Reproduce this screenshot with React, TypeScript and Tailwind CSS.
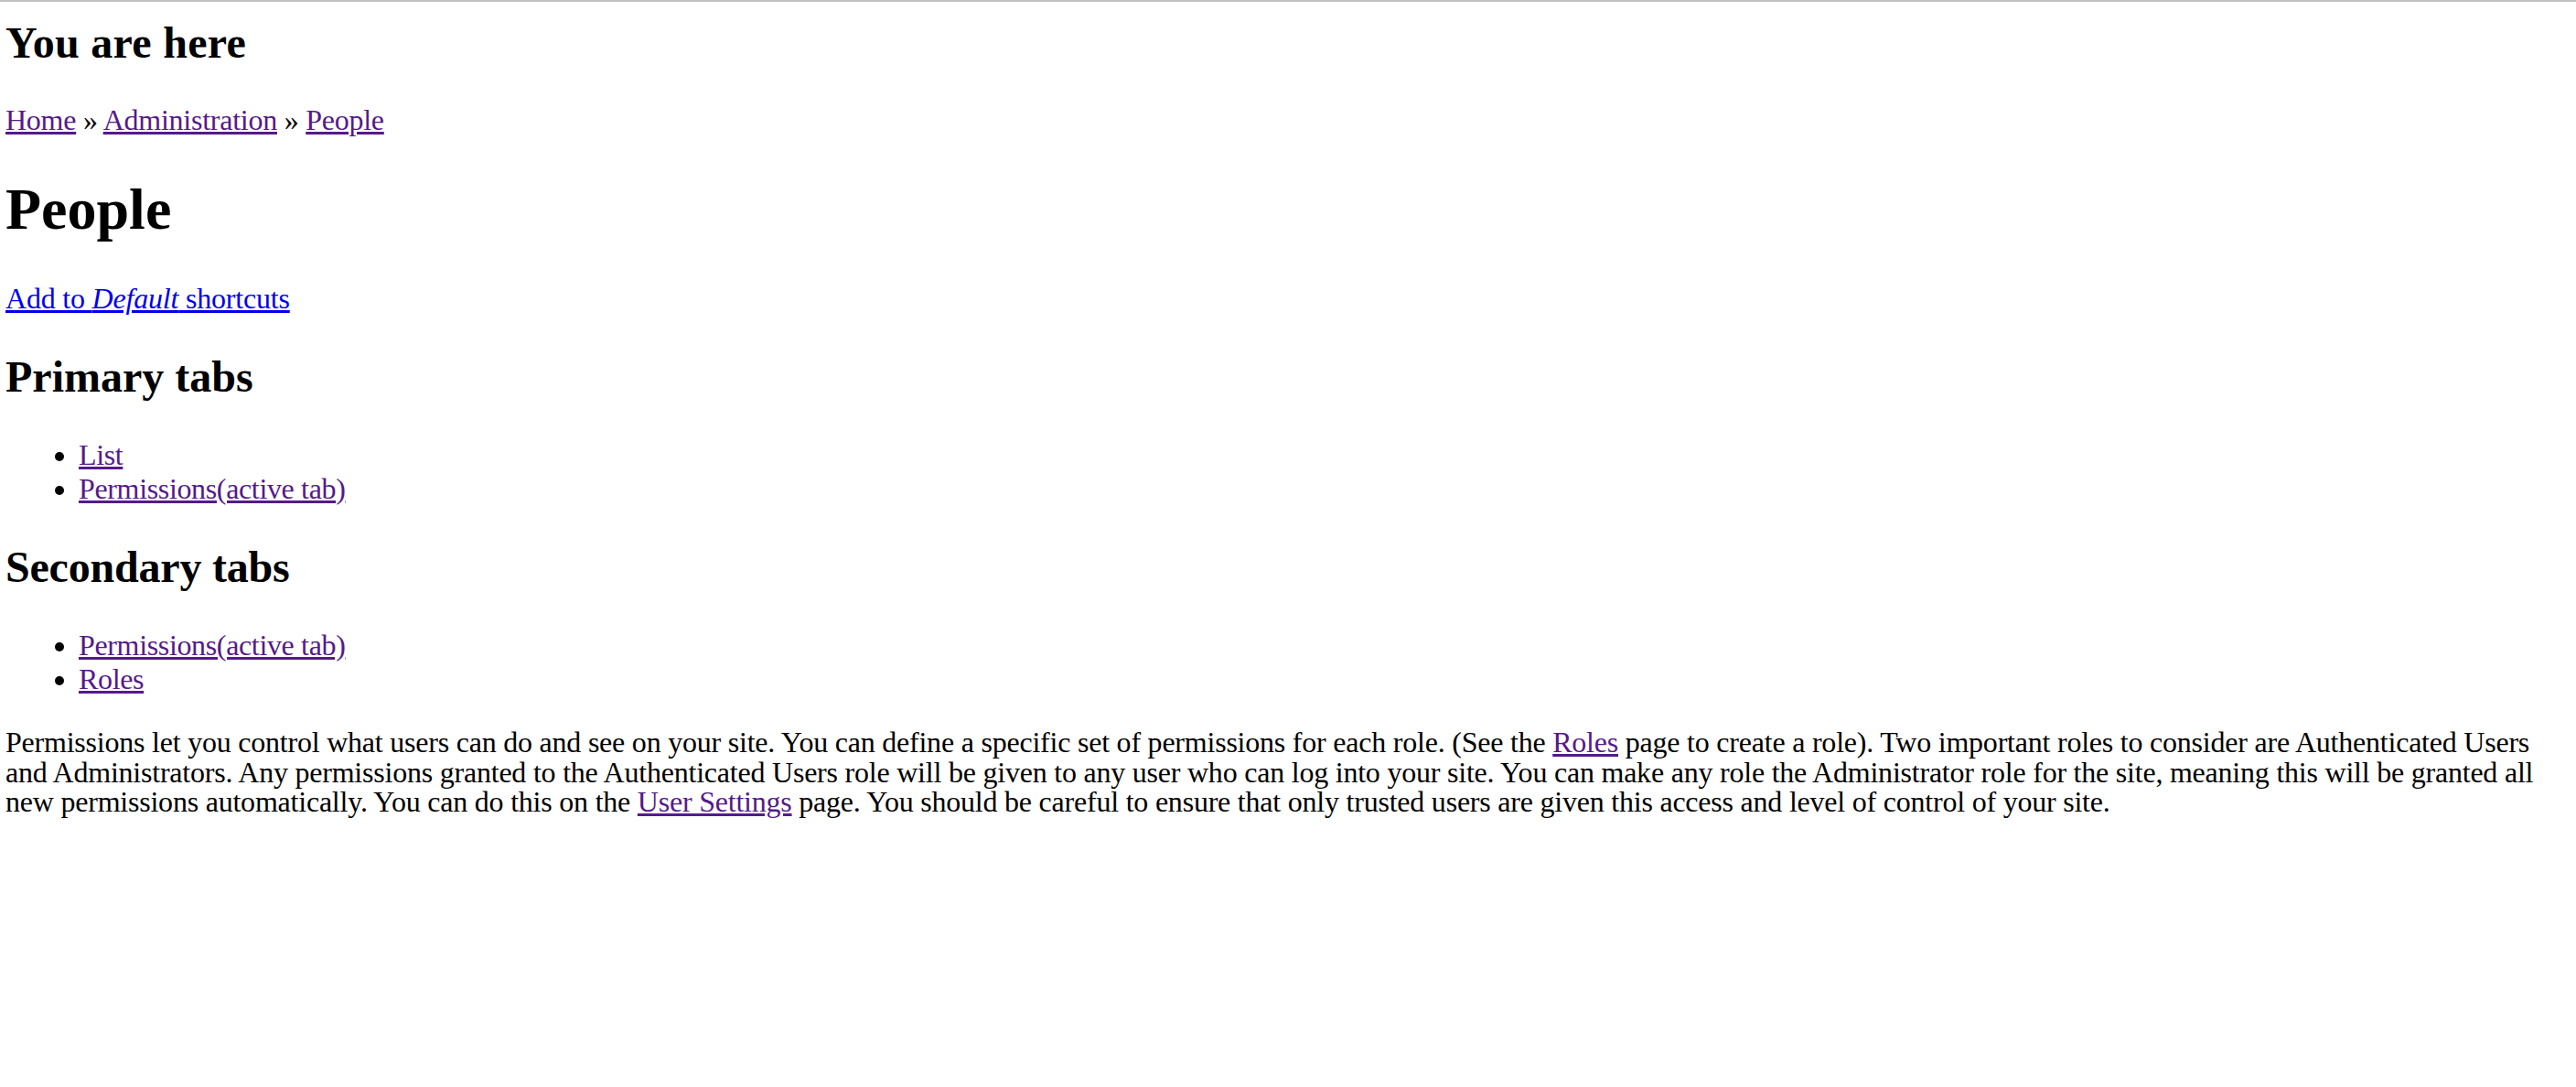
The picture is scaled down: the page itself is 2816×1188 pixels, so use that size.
import React from "react";

const visited = "text-[#551A8B] underline";

export default function App() {
  return (
    <div className="min-h-screen bg-white text-black font-['Liberation_Serif','Times_New_Roman',serif] text-[32px] leading-[35px] tracking-[-0.35px]">
      <div className="h-[2px] bg-[#c2c2c2]" />
      <div className="flex flex-col px-[6px]">
        <h2 className="mt-[17px] text-[48px] font-bold leading-[normal] tracking-[0.3px]">You are here</h2>
        <p className="mt-[40px] tracking-[-0.25px]">
          <a href="#" className={visited}>Home</a> » <a href="#" className={visited}>Administration</a> »{" "}
          <a href="#" className={visited}>People</a>
        </p>
        <h1 className="mt-[43px] text-[64px] font-bold leading-[normal] tracking-normal">People</h1>
        <p className="mt-[43px] tracking-[-0.2px]">
          <a href="#" className="text-[#0000EE] underline">
            Add to <em>Default</em> shortcuts
          </a>
        </p>
        <h2 className="mt-[40px] text-[48px] font-bold leading-[normal] tracking-normal">Primary tabs</h2>
        <ul className="mt-[40px] list-disc pl-[80px] leading-[36.5px]">
          <li><a href="#" className={visited}>List</a></li>
          <li><a href="#" className={visited}>Permissions(active tab)</a></li>
        </ul>
        <h2 className="mt-[40px] text-[48px] font-bold leading-[normal] tracking-[-0.2px]">Secondary tabs</h2>
        <ul className="mt-[40px] list-disc pl-[80px] leading-[36.5px]">
          <li><a href="#" className={visited}>Permissions(active tab)</a></li>
          <li><a href="#" className={visited}>Roles</a></li>
        </ul>
        <p className="mt-[35px] leading-[32.5px] tracking-[-0.22px]">
          Permissions let you control what users can do and see on your site. You can define a specific set of permissions
          for each role. (See the <a href="#" className={visited}>Roles</a> page to create a role). Two important roles to
          consider are Authenticated Users and Administrators. Any permissions granted to the Authenticated Users role will
          be given to any user who can log into your site. You can make any role the Administrator role for the site,
          meaning this will be granted all new permissions automatically. You can do this on the{" "}
          <a href="#" className={visited}>User Settings</a> page. You should be careful to ensure that only trusted users
          are given this access and level of control of your site.
        </p>
      </div>
    </div>
  );
}
